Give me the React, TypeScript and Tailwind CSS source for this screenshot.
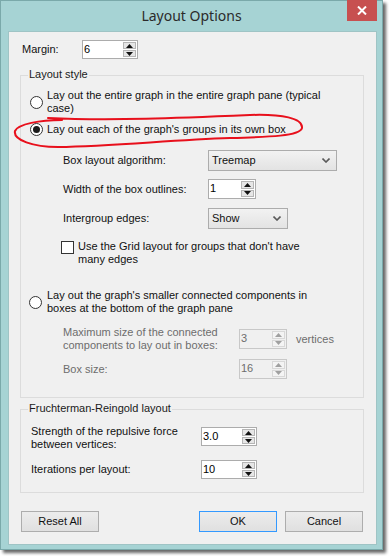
import React from "react";

const FONT = "font-['Liberation_Sans',Arial,sans-serif]";

function Arrow({ up, disabled }: { up?: boolean; disabled?: boolean }) {
  return (
    <svg width="7" height="4" viewBox="0 0 7 4">
      <path d={up ? "M0 4 L3.5 0 L7 4 Z" : "M0 0 L3.5 4 L7 0 Z"} fill={disabled ? "#a0a0a0" : "#111"} />
    </svg>
  );
}

function SpinBox({ value, width, height = 19, disabled }: { value: string; width: number; height?: number; disabled?: boolean }) {
  return (
    <div
      className={
        "flex shrink-0 border " +
        (disabled ? "border-[#c8c8c8] bg-[#f0f0f0] text-[#6d6d6d]" : "border-[#acacac] bg-white text-black")
      }
      style={{ width, height }}
    >
      <div className="flex-1 pl-[1px] leading-[17px]">{value}</div>
      <div className="flex w-[15px] flex-col gap-[1px] p-[1px]">
        <div
          className={
            "flex flex-1 items-center justify-center border " +
            (disabled ? "border-[#d8d8d8] bg-[#f4f4f4]" : "border-[#b5b5b5] bg-[#e6e6e6]")
          }
        >
          <Arrow up disabled={disabled} />
        </div>
        <div
          className={
            "flex flex-1 items-center justify-center border " +
            (disabled ? "border-[#d8d8d8] bg-[#f4f4f4]" : "border-[#b5b5b5] bg-[#e6e6e6]")
          }
        >
          <Arrow disabled={disabled} />
        </div>
      </div>
    </div>
  );
}

function Select({ value, width }: { value: string; width: number }) {
  return (
    <div
      className="flex h-[21px] shrink-0 items-center justify-between border border-[#acacac] bg-gradient-to-b from-[#f2f2f2] to-[#e3e3e3] pl-[3px] pr-[6px]"
      style={{ width }}
    >
      <span>{value}</span>
      <svg width="8" height="5" viewBox="0 0 8 5">
        <path d="M0.5 0.5 L4 4 L7.5 0.5" fill="none" stroke="#5a5a5a" strokeWidth="1.6" />
      </svg>
    </div>
  );
}

function Radio({ checked }: { checked?: boolean }) {
  return (
    <div className="flex h-[13px] w-[13px] shrink-0 items-center justify-center rounded-full border border-[#333] bg-white">
      {checked && <div className="h-[7px] w-[7px] rounded-full bg-[#1a1a1a]" />}
    </div>
  );
}

function GroupBox({ label, className, children }: { label: string; className: string; children: React.ReactNode }) {
  return (
    <div className={"relative ml-[11px] w-[344px] border border-[#dcdcdc] " + className}>
      <span className="absolute -top-[8px] left-[7px] bg-[#f0f0f0] px-[1px] leading-[13px] text-[#1a1a1a]">{label}</span>
      {children}
    </div>
  );
}

function Button({ children, focused }: { children: React.ReactNode; focused?: boolean }) {
  return (
    <div
      className={
        "flex h-[21px] w-[78px] items-center justify-center border bg-gradient-to-b from-[#ececec] to-[#e0e0e0] " +
        (focused ? "border-[#3399ff]" : "border-[#adadad]")
      }
    >
      {children}
    </div>
  );
}

export default function App() {
  return (
    <div className={"relative h-[556px] w-[389px] bg-white text-[11px] leading-[13px] text-[#111] " + FONT}>
      <div className="flex h-[550px] w-[383px] flex-col border border-[#7aa9aa] bg-[#a6d3d4] shadow-[3px_3px_3px_rgba(0,0,0,0.6)]">
        <div className="relative flex h-[30px] shrink-0 items-center justify-center">
          <span className="font-['Noto_Sans',sans-serif] text-[14px] leading-[20px] text-[#2b2b2b]">Layout Options</span>
          <div className="absolute right-[5px] top-[-1px] flex h-[21px] w-[30px] items-center justify-center bg-[#c75050]">
            <svg width="10" height="9" viewBox="0 0 10 9">
              <path d="M1 0.5 L9 8.5 M9 0.5 L1 8.5" stroke="white" strokeWidth="2" />
            </svg>
          </div>
        </div>

        <div className="ml-[7px] flex h-[514px] w-[369px] flex-col border border-[#9fc4c5] bg-[#f0f0f0]">
          {/* Margin */}
          <div className="mt-[8px] flex h-[19px] items-center pl-[13px]">
            <span className="w-[60px]">Margin:</span>
            <SpinBox value="6" width={56} />
          </div>

          {/* Layout style */}
          <GroupBox label="Layout style" className="mt-[16px] h-[323px]">
            <div className="mt-[13px] flex items-center pl-[9px]">
              <Radio />
              <span className="ml-[4px]">
                Lay out the entire graph in the entire graph pane (typical
                <br />
                case)
              </span>
            </div>
            <div className="mt-[8px] flex items-center pl-[9px]">
              <Radio checked />
              <span className="ml-[4px]">Lay out each of the graph's groups in its own box</span>
            </div>

            <div className="mt-[14px] flex h-[21px] items-center pl-[42px]">
              <span className="w-[145px]">Box layout algorithm:</span>
              <Select value="Treemap" width={129} />
            </div>
            <div className="mt-[8px] flex h-[20px] items-center pl-[42px]">
              <span className="w-[145px]">Width of the box outlines:</span>
              <SpinBox value="1" width={48} height={20} />
            </div>
            <div className="mt-[9px] flex h-[21px] items-center pl-[42px]">
              <span className="w-[145px]">Intergroup edges:</span>
              <Select value="Show" width={80} />
            </div>
            <div className="mt-[11px] flex items-start pl-[40px]">
              <div className="mt-[1px] h-[13px] w-[13px] shrink-0 border border-[#333] bg-white" />
              <span className="ml-[4px]">
                Use the Grid layout for groups that don't have
                <br />
                many edges
              </span>
            </div>

            <div className="mt-[23px] flex items-center pl-[8px]">
              <Radio />
              <span className="ml-[5px]">
                Lay out the graph's smaller connected components in
                <br />
                boxes at the bottom of the graph pane
              </span>
            </div>
            <div className="mt-[11px] flex items-center pl-[42px] text-[#6d6d6d]">
              <span className="w-[176px]">
                Maximum size of the connected
                <br />
                components to lay out in boxes:
              </span>
              <SpinBox value="3" width={48} height={20} disabled />
              <span className="ml-[9px]">vertices</span>
            </div>
            <div className="mt-[7px] flex h-[20px] items-center pl-[42px] text-[#6d6d6d]">
              <span className="w-[176px]">Box size:</span>
              <SpinBox value="16" width={48} height={20} disabled />
            </div>
          </GroupBox>

          {/* Fruchterman-Reingold */}
          <GroupBox label="Fruchterman-Reingold layout" className="mt-[11px] h-[84px]">
            <div className="mt-[15px] flex items-start pl-[10px]">
              <span className="w-[170px]">
                Strength of the repulsive force
                <br />
                between vertices:
              </span>
              <div className="mt-[2px]">
                <SpinBox value="3.0" width={56} />
              </div>
            </div>
            <div className="mt-[9px] flex h-[19px] items-center pl-[10px]">
              <span className="w-[170px]">Iterations per layout:</span>
              <SpinBox value="10" width={56} />
            </div>
          </GroupBox>

          {/* Buttons */}
          <div className="mt-[18px] flex pl-[12px]">
            <Button>Reset All</Button>
            <div className="ml-[100px]">
              <Button focused>OK</Button>
            </div>
            <div className="ml-[8px]">
              <Button>Cancel</Button>
            </div>
          </div>
        </div>
      </div>

      {/* red hand-drawn annotation */}
      <svg className="pointer-events-none absolute left-0 top-0" width="389" height="556" viewBox="0 0 389 556">
        <path
          d="M62 120 C40 120 18 124 15 131 C13 140 33 147 58 147 C115 146 170 140 230 138 C270 137 300 136 302 128 C303 118 282 114 250 115 C180 118 110 121 48 118"
          fill="none"
          stroke="#e8101c"
          strokeWidth="2"
          strokeLinecap="round"
        />
      </svg>
    </div>
  );
}
